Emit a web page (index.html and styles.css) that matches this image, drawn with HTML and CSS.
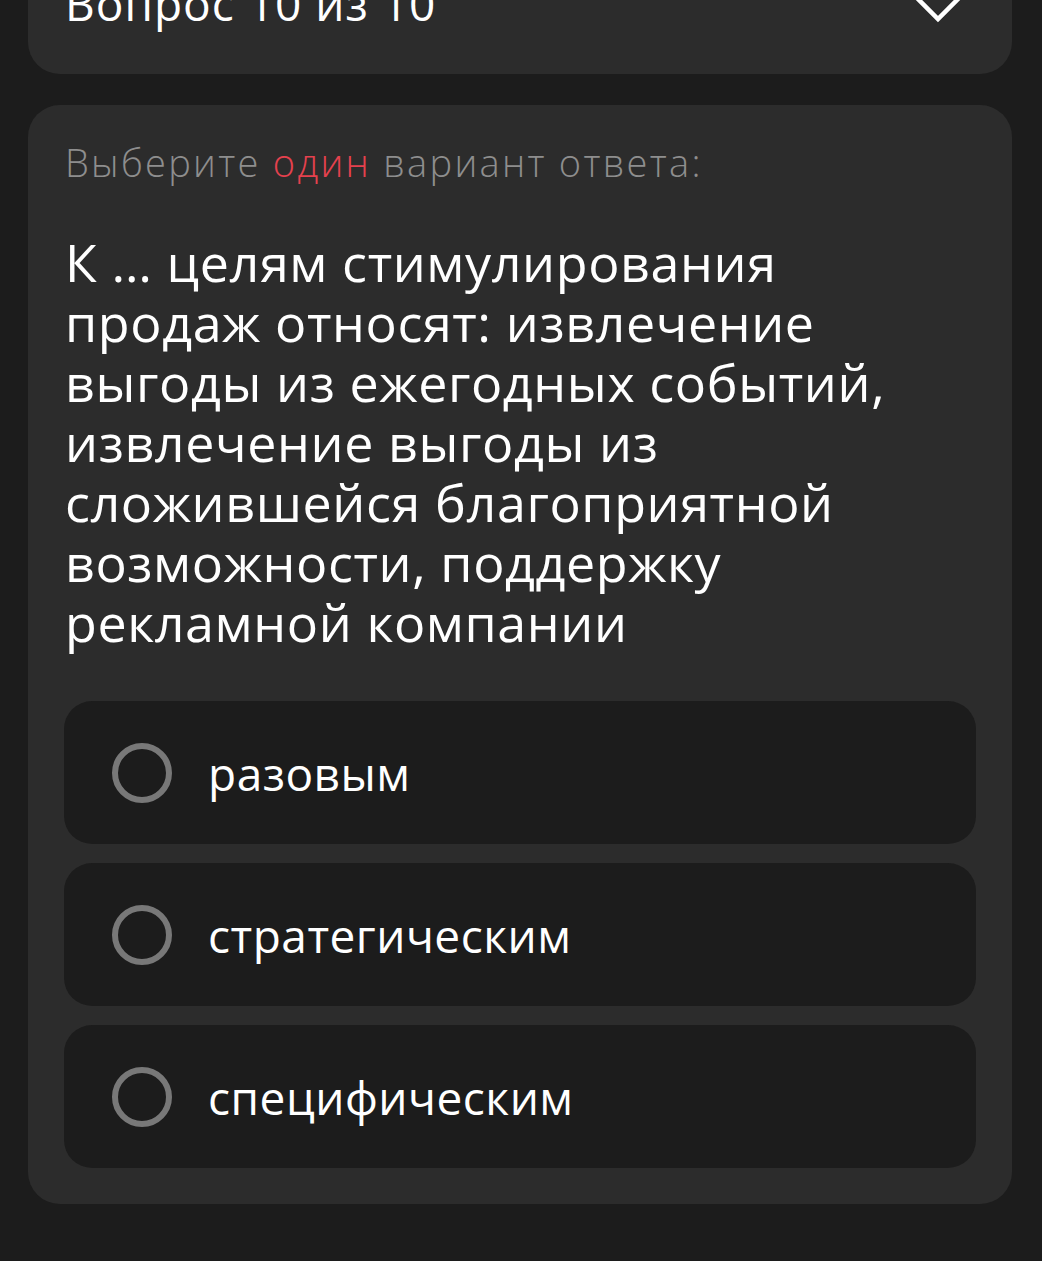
FILE: index.html
```html
<!DOCTYPE html>
<html lang="ru">
<head>
<meta charset="utf-8">
<link rel="stylesheet" href="styles.css">
</head>
<body>
<div class="page">
  <div class="card top-card">
    <div class="top-row">
      <span class="top-title">Вопрос 10 из 10</span>
      <svg class="chevron" width="52" height="30" viewBox="0 0 52 30"><path d="M4 4 L26 26 L48 4" fill="none" stroke="#ffffff" stroke-width="4.5" stroke-linecap="square"/></svg>
    </div>
  </div>
  <div class="card main-card">
    <p class="instruction">Выберите <span class="accent">один</span> вариант ответа:</p>
    <p class="question">К … целям стимулирования<br>продаж относят: извлечение<br>выгоды из ежегодных событий,<br>извлечение выгоды из<br>сложившейся благоприятной<br>возможности, поддержку<br>рекламной компании</p>
    <div class="options">
      <div class="option"><span class="radio"></span><span class="option-text">разовым</span></div>
      <div class="option"><span class="radio"></span><span class="option-text">стратегическим</span></div>
      <div class="option"><span class="radio"></span><span class="option-text">специфическим</span></div>
    </div>
  </div>
</div>
</body>
</html>
```
FILE: styles.css
```css
html, body {
  margin: 0;
  padding: 0;
  background: #1c1c1c;
  height: 100%;
  overflow: hidden;
}
body {
  font-family: "Open Sans", "Liberation Sans", sans-serif;
  color: #ffffff;
}
.page {
  padding: 0 30px 0 28px;
  display: flex;
  flex-direction: column;
  gap: 31px;
}
.card {
  background: #2c2c2c;
  border-radius: 32px;
}
.top-card {
  margin-top: -60px;
  padding: 30px 36px 38px 37px;
}
.top-row {
  height: 66px;
  display: flex;
  align-items: center;
  justify-content: space-between;
}
.top-title {
  font-size: 46px;
  line-height: 66px;
  letter-spacing: 1px;
  white-space: nowrap;
}
.chevron {
  margin-right: 12px;
  margin-top: 10px;
}
.main-card {
  padding: 34px 36px 36px 36px;
}
.instruction {
  margin: 0 0 0 1px;
  font-size: 38px;
  line-height: 46px;
  font-weight: 300;
  letter-spacing: 2.3px;
  color: #8e8e8e;
  white-space: nowrap;
}
.accent {
  color: #e5414e;
}
.question {
  margin: 47px 0 0 1px;
  font-size: 52px;
  line-height: 60px;
  letter-spacing: 0.6px;
  white-space: nowrap;
}
.options {
  margin-top: 49px;
  display: flex;
  flex-direction: column;
  gap: 19px;
}
.option {
  height: 143px;
  background: #1c1c1c;
  border-radius: 28px;
  display: flex;
  align-items: center;
  padding-left: 48px;
  gap: 36px;
}
.radio {
  width: 48px;
  height: 48px;
  border: 6px solid #787878;
  border-radius: 50%;
  flex: none;
}
.option-text {
  font-size: 46px;
  line-height: 60px;
  letter-spacing: 0.5px;
}
```
